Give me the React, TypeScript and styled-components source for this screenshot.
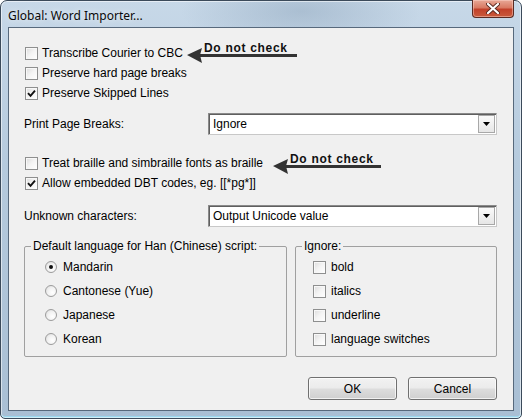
import React from "react";
import styled, { createGlobalStyle } from "styled-components";

const GlobalStyle = createGlobalStyle`
  html, body { margin: 0; padding: 0; background: #ffffff; }
  body { font-family: "Liberation Sans", Arial, sans-serif; font-size: 12px; color: #000; }
  * { box-sizing: border-box; }
`;

const Window = styled.div`
  width: 522px;
  height: 419px;
  display: flex;
  flex-direction: column;
  border: 1px solid #3b4a5a;
  border-radius: 7px 7px 5px 5px;
  padding: 0 7px 7px 7px;
  background:
    radial-gradient(ellipse 120px 40px at 300px 10px, rgba(120,145,170,0.35), rgba(120,145,170,0) 100%),
    linear-gradient(180deg, #c7d8e8 0%, #b5cadd 40%, #a9bfd4 100%);
  box-shadow: inset 0 0 0 1px rgba(255,255,255,0.55), inset 0 -2px 0 0 #9ad7ee;
`;

const TitleBar = styled.div`
  height: 26px;
  display: flex;
  align-items: flex-start;
  justify-content: space-between;
`;

const Title = styled.div`
  padding-top: 6px;
  font-family: "Noto Sans", "Liberation Sans", sans-serif;
  font-size: 12px;
  color: #0a0a0a;
  text-shadow: 0 0 6px rgba(255,255,255,0.9);
`;

const CloseButton = styled.div`
  width: 42px;
  height: 18px;
  margin-top: -1px;
  display: flex;
  align-items: center;
  justify-content: center;
  border: 1px solid #5a2a22;
  border-top: none;
  border-radius: 0 0 4px 4px;
  background: linear-gradient(180deg, #e8a896 0%, #d97a63 45%, #c2412a 55%, #c95a3c 100%);
  box-shadow: inset 0 0 0 1px rgba(255,220,210,0.45);
`;

const Client = styled.div`
  flex: 1;
  background: #f0f0f0;
  border: 1px solid #57697c;
  padding: 15px 16px 0 15px;
  display: flex;
  flex-direction: column;
`;

const CheckRow = styled.div<{ $gap?: number }>`
  position: relative;
  height: 20px;
  display: flex;
  align-items: center;
  gap: ${(p) => p.$gap ?? 4}px;
`;

const Block = styled.div<{ $mt: number }>`
  margin-top: ${(p) => p.$mt}px;
  display: flex;
  flex-direction: column;
`;

const Box = styled.span<{ $ml?: number }>`
  width: 13px;
  height: 13px;
  flex: none;
  margin-left: ${(p) => p.$ml ?? 1}px;
  border: 1px solid #8e8f8f;
  background: linear-gradient(135deg, #dcdcdc 0%, #f4f4f4 50%, #ffffff 100%);
  box-shadow: inset 1px 1px 0 #f8f8f8;
  display: flex;
  align-items: center;
  justify-content: center;
`;

const Label = styled.span`
  white-space: nowrap;
  line-height: 14px;
`;

const SelectRow = styled.div`
  display: grid;
  grid-template-columns: 184px 1fr;
  align-items: center;
  height: 22px;
`;

const SelectBox = styled.div`
  height: 22px;
  background: #fff;
  border: 1px solid #8a8a8a;
  border-right-color: #c8c8c8;
  border-bottom-color: #c8c8c8;
  box-shadow: inset 1px 1px 0 #5f5f5f;
  display: flex;
  align-items: center;
  justify-content: space-between;
  padding: 1px 1px 1px 4px;
`;

const DropButton = styled.span`
  width: 17px;
  height: 18px;
  border: 1px solid #a8a8a8;
  background: linear-gradient(180deg, #fafafa 0%, #e6e6e6 100%);
  display: flex;
  align-items: center;
  justify-content: center;
`;

const Groups = styled.div`
  margin-top: 12px;
  display: grid;
  grid-template-columns: 263px 1fr;
  gap: 8px;
`;

const Group = styled.fieldset`
  margin: 0;
  padding: 2px 6px 5px 6px;
  border: 1px solid #a0a0a0;
  border-radius: 2px;
  min-width: 0;
`;

const Legend = styled.legend`
  padding: 0 2px;
  line-height: 14px;
  font-size: 12px;
`;

const Options = styled.div<{ $pl: number }>`
  display: flex;
  flex-direction: column;
  padding-left: ${(p) => p.$pl}px;
`;

const OptionRow = styled.div<{ $gap: number }>`
  height: 24px;
  display: flex;
  align-items: center;
  gap: ${(p) => p.$gap}px;
`;

const Radio = styled.span`
  width: 12px;
  height: 12px;
  flex: none;
  border-radius: 50%;
  border: 1px solid #9c9c9c;
  background: radial-gradient(circle at 65% 65%, #ffffff 0%, #f2f2f2 50%, #d8d8d8 100%);
  display: flex;
  align-items: center;
  justify-content: center;
`;

const Dot = styled.span`
  width: 4px;
  height: 4px;
  border-radius: 50%;
  background: #111;
`;

const ButtonRow = styled.div`
  margin-top: 20px;
  display: flex;
  justify-content: flex-end;
  gap: 11px;
`;

const Button = styled.button`
  width: 89px;
  height: 23px;
  border: 1px solid #707070;
  border-radius: 3px;
  background: linear-gradient(180deg, #f2f2f2 0%, #ebebeb 48%, #dddddd 52%, #cfcfcf 100%);
  box-shadow: inset 0 0 0 1px rgba(255,255,255,0.7);
  font-family: "Liberation Sans", Arial, sans-serif;
  font-size: 12px;
  color: #000;
  padding: 0;
`;

const Annotation = styled.div<{ $left: number; $top: number; $w: number }>`
  position: absolute;
  left: ${(p) => p.$left}px;
  top: ${(p) => p.$top}px;
  width: ${(p) => p.$w}px;
  height: 24px;
`;

const AnnotationArrow = styled.svg`
  position: absolute;
  left: 0;
  top: 0;
`;

const NoteText = styled.span`
  position: absolute;
  left: 18px;
  top: 1px;
  font-family: "Liberation Sans", Arial, sans-serif;
  font-weight: bold;
  font-size: 12px;
  letter-spacing: 0.7px;
  line-height: 13px;
  color: #111;
  white-space: nowrap;
`;

const Check = () => (
  <svg width="9" height="9" viewBox="0 0 9 9">
    <path d="M1 4.2 L3.5 6.8 L8 1.6" fill="none" stroke="#111" strokeWidth="1.9" />
  </svg>
);

const CheckBox: React.FC<{ checked?: boolean; ml?: number }> = ({ checked, ml }) => (
  <Box $ml={ml}>{checked ? <Check /> : null}</Box>
);

const Note: React.FC<{ left: number; top: number; w: number }> = ({ left, top, w }) => (
  <Annotation $left={left} $top={top} $w={w}>
    <AnnotationArrow width={w} height={24} viewBox={`0 0 ${w} 24`}>
      <polygon points="1,14 16,7 14,14 16,22" fill="#333" />
      <rect x="13" y="13" width={w - 13} height="3" fill="#333" />
    </AnnotationArrow>
    <NoteText>Do not check</NoteText>
  </Annotation>
);

const Select: React.FC<{ value: string }> = ({ value }) => (
  <SelectBox>
    <span>{value}</span>
    <DropButton>
      <svg width="7" height="4" viewBox="0 0 7 4">
        <polygon points="0,0 7,0 3.5,4" fill="#000" />
      </svg>
    </DropButton>
  </SelectBox>
);

export default function App() {
  return (
    <>
      <GlobalStyle />
      <Window>
        <TitleBar>
          <Title>Global: Word Importer...</Title>
          <CloseButton>
            <svg width="14" height="11" viewBox="0 0 14 11">
              <path d="M2 1 L12 10 M12 1 L2 10" stroke="#5a2a22" strokeWidth="4" strokeLinecap="round" />
              <path d="M2 1 L12 10 M12 1 L2 10" stroke="#ffffff" strokeWidth="2.2" strokeLinecap="round" />
            </svg>
          </CloseButton>
        </TitleBar>
        <Client>
          <Block $mt={0}>
            <CheckRow>
              <CheckBox />
              <Label>Transcribe Courier to CBC</Label>
              <Note left={162} top={-2} w={111} />
            </CheckRow>
            <CheckRow>
              <CheckBox />
              <Label>Preserve hard page breaks</Label>
            </CheckRow>
            <CheckRow>
              <CheckBox checked />
              <Label>Preserve Skipped Lines</Label>
            </CheckRow>
          </Block>
          <Block $mt={10}>
            <SelectRow>
              <Label>Print Page Breaks:</Label>
              <Select value="Ignore" />
            </SelectRow>
          </Block>
          <Block $mt={18}>
            <CheckRow>
              <CheckBox />
              <Label>Treat braille and simbraille fonts as braille</Label>
              <Note left={248} top={-1} w={109} />
            </CheckRow>
            <CheckRow>
              <CheckBox checked />
              <Label>Allow embedded DBT codes, eg. [[*pg*]]</Label>
            </CheckRow>
          </Block>
          <Block $mt={12}>
            <SelectRow>
              <Label>Unknown characters:</Label>
              <Select value="Output Unicode value" />
            </SelectRow>
          </Block>
          <Groups>
            <Group>
              <Legend>Default language for Han (Chinese) script:</Legend>
              <Options $pl={14}>
                {["Mandarin", "Cantonese (Yue)", "Japanese", "Korean"].map((t, i) => (
                  <OptionRow key={t} $gap={6}>
                    <Radio>{i === 0 ? <Dot /> : null}</Radio>
                    <Label>{t}</Label>
                  </OptionRow>
                ))}
              </Options>
            </Group>
            <Group>
              <Legend>Ignore:</Legend>
              <Options $pl={11}>
                {["bold", "italics", "underline", "language switches"].map((t) => (
                  <OptionRow key={t} $gap={5}>
                    <CheckBox ml={0} />
                    <Label>{t}</Label>
                  </OptionRow>
                ))}
              </Options>
            </Group>
          </Groups>
          <ButtonRow>
            <Button>OK</Button>
            <Button>Cancel</Button>
          </ButtonRow>
        </Client>
      </Window>
    </>
  );
}
